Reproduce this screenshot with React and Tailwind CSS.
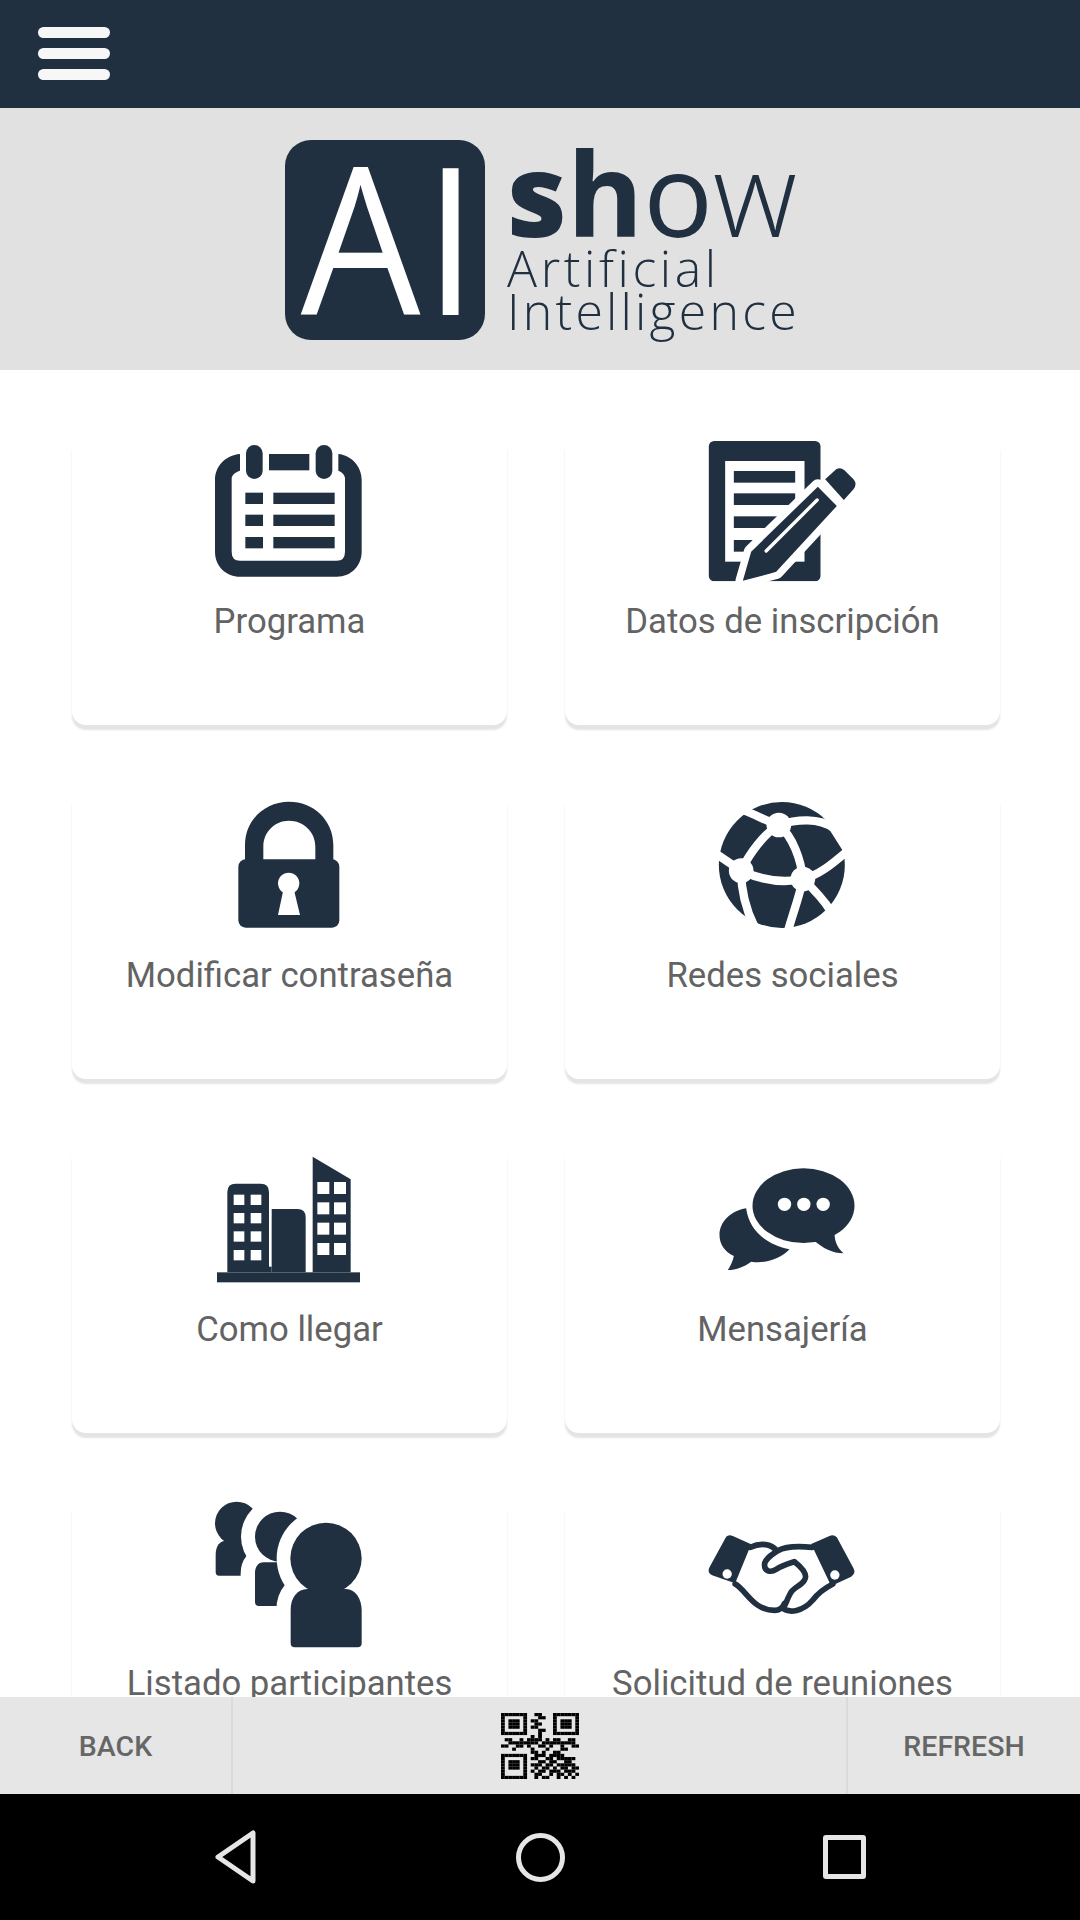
import React from 'react';

const NAVY = '#203040';

const CalendarIcon = () => (
  <svg viewBox="492 48 450 450" className="w-full h-full" fill={NAVY}>
    <path d="M570 102C525 106 495 140 495 180V395C495 440 530 470 570 470H860C905 470 935 435 935 395V180C935 140 905 106 865 102V152C875 155 885 165 885 175V395Q885 422 860 422H570Q545 422 545 395V175C545 165 558 155 570 152Z" />
    <rect x="588" y="75" width="50" height="102" rx="25" />
    <rect x="797" y="75" width="50" height="102" rx="25" />
    <rect x="657" y="102" width="121" height="49" />
    {[218, 284, 351].map((y) => (
      <g key={y}>
        <rect x="586" y={y} width="53" height="34" />
        <rect x="670" y={y} width="184" height="34" />
      </g>
    ))}
  </svg>
);

const FormIcon = () => (
  <svg viewBox="472.5 48 450 450" className="w-full h-full" fill={NAVY}>
    <rect x="478" y="63" width="335" height="421" rx="16" />
    <rect x="527" y="123" width="238" height="302" fill="#fff" />
    {[153, 220, 289, 360].map((y) => (
      <rect key={y} x="553" y={y} width="184" height="35" />
    ))}
    <path d="M580 482L605 395L805 200L862 258L680 455Z" fill="#fff" stroke="#fff" strokeWidth="44" strokeLinejoin="round" />
    <rect x="480" y="484" width="340" height="30" fill="#fff" />
    <path d="M580 482L605 395L805 200L862 258L680 455L665 460Z" />
    <path d="M827 178L860 148Q872 140 884 150L912 178Q924 192 912 208L883 240Z" />
    <path d="M650 393L803 240" stroke="#fff" strokeWidth="10" strokeLinecap="round" />
  </svg>
);

const LockIcon = () => (
  <svg viewBox="72 30 450 450" className="w-full h-full" fill={NAVY}>
    <path d="M165 240V195C165 120 225 65 297 65C370 65 430 120 430 195V240H376V200C376 155 340 122 297 122C255 122 220 155 220 200V240Z" />
    <rect x="145" y="238" width="303" height="205" rx="22" />
    <circle cx="296" cy="310" r="32" fill="#fff" />
    <path d="M280 330L264 405H330L312 330Z" fill="#fff" />
  </svg>
);

const GlobeIcon = () => (
  <svg viewBox="52.5 30 450 450" className="w-full h-full">
    <circle cx="277" cy="255" r="189" fill={NAVY} />
    <g fill="none" stroke="#fff" strokeWidth="25">
      <path d="M165 92C200 105 235 125 268 135C320 118 390 112 432 145L470 205" />
      <path d="M85 225L155 272" />
      <path d="M268 135C225 160 180 220 155 272" />
      <path d="M268 135C310 170 335 240 340 297" />
      <path d="M155 272C215 300 280 310 340 297C390 285 430 250 475 212" />
      <path d="M155 272C155 330 170 390 195 440" />
      <path d="M340 297C330 350 310 400 295 455" />
      <path d="M340 297C370 325 400 355 425 395" />
    </g>
    <circle cx="268" cy="135" r="37" fill="#fff" />
    <circle cx="155" cy="272" r="37" fill="#fff" />
    <circle cx="340" cy="297" r="37" fill="#fff" />
  </svg>
);

const CityIcon = () => (
  <svg viewBox="72 12 450 450" className="w-full h-full" fill={NAVY}>
    <rect x="81" y="397" width="429" height="30" />
    <path d="M112 397V156Q112 131 137 131H212Q237 131 237 156V397Z" />
    <path d="M245 397V207H322Q347 207 347 232V397Z" />
    <rect x="237" y="380" width="8" height="17" />
    <path d="M368 50L482 118V397H368Z" />
    {[164, 219, 274, 330].map((y) => (
      <g key={y} fill="#fff">
        <rect x="131" y={y} width="32" height="31" />
        <rect x="182" y={y} width="32" height="31" />
      </g>
    ))}
    {[126, 187, 248, 309].map((y) => (
      <g key={y} fill="#fff">
        <rect x="382" y={y} width="36" height="36" />
        <rect x="432" y={y} width="36" height="36" />
      </g>
    ))}
  </svg>
);

const ChatIcon = () => (
  <svg viewBox="52.5 12 450 450" className="w-full h-full" fill={NAVY}>
    <ellipse cx="342" cy="197" rx="153" ry="112" />
    <path d="M372 300C400 325 430 340 462 340C445 325 435 305 435 280Z" />
    <path d="M170 205C125 212 90 245 90 285C90 312 105 335 133 348C130 365 122 380 115 390C140 390 165 380 185 365C230 372 275 355 300 328C240 315 180 280 170 205Z" />
    <circle cx="285" cy="193" r="20" fill="#fff" />
    <circle cx="343" cy="193" r="20" fill="#fff" />
    <circle cx="401" cy="193" r="20" fill="#fff" />
  </svg>
);

const BIG_BODY = 'M302 460V360C302 320 325 295 355 297H465C495 295 515 325 515 360V460Q515 472 503 472H314Q302 472 302 460Z';
const MID_BODY = 'M195 335V250C195 230 205 215 225 217H300V348H207Q195 348 195 335Z';

const PeopleIcon = () => (
  <svg viewBox="72 24 450 450" className="w-full h-full" fill={NAVY}>
    <circle cx="140" cy="100" r="65" />
    <path d="M77 245V195C77 165 90 152 110 152H170V257H87Q77 257 77 245Z" />
    <circle cx="270" cy="140" r="117" fill="#fff" />
    <path d={MID_BODY} fill="#fff" stroke="#fff" strokeWidth="86" strokeLinejoin="round" />
    <circle cx="270" cy="140" r="75" />
    <path d={MID_BODY} />
    <circle cx="408" cy="205" r="148" fill="#fff" />
    <path d={BIG_BODY} fill="#fff" stroke="#fff" strokeWidth="86" strokeLinejoin="round" />
    <circle cx="408" cy="205" r="107" />
    <path d={BIG_BODY} />
  </svg>
);

const HandshakeIcon = () => (
  <svg viewBox="52.5 -6 450 450" className="w-full h-full" fill={NAVY}>
    <path d="M110 110Q118 102 130 108L185 133L137 250L68 226Q52 218 60 202Z" />
    <path d="M365 132L420 108Q432 102 442 112L492 205Q500 220 485 230L425 258Z" />
    <circle cx="113" cy="222" r="14" fill="#fff" />
    <circle cx="436" cy="225" r="14" fill="#fff" />
    <g fill="none" stroke={NAVY} strokeWidth="17" strokeLinecap="round" strokeLinejoin="round">
      <path d="M182 142C215 127 245 132 262 152" />
      <path d="M137 252C172 272 190 330 255 331C270 331 280 322 285 310" />
      <path d="M368 142C330 138 290 138 265 152C245 165 225 178 225 195C225 215 245 218 260 208C280 195 300 190 315 185C340 205 355 225 345 240C335 260 310 260 300 285C292 300 287 318 280 325C300 340 340 335 370 300C385 280 405 265 430 252" />
    </g>
  </svg>
);

const QR_ROWS = [
  '111111100110001111111',
  '100000100011001000001',
  '101110101100001011101',
  '101110100110001011101',
  '101110101100001011101',
  '100000100011001000001',
  '111111100010001111111',
  '000000001010000000000',
  '011001011110101100110',
  '001111111101111111110',
  '110011010011010010011',
  '000100001000100011000',
  '000000001101001100000',
  '111111100111011110000',
  '100000101100110111110',
  '101110100011011001100',
  '101110101110110111110',
  '101110100101101011011',
  '100000101011011101110',
  '100000100110010110101',
  '111111100101100101010',
];

const QrCode = () => (
  <svg viewBox="0 0 21 21" preserveAspectRatio="none" className="w-[78px] h-[66px]" fill="#000">
    {QR_ROWS.map((row, y) =>
      row.split('').map((cell, x) =>
        cell === '1' ? <rect key={`${x}-${y}`} x={x} y={y} width="1.02" height="1.02" /> : null
      )
    )}
  </svg>
);

const items = [
  { label: 'Programa', Icon: CalendarIcon },
  { label: 'Datos de inscripción', Icon: FormIcon },
  { label: 'Modificar contraseña', Icon: LockIcon },
  { label: 'Redes sociales', Icon: GlobeIcon },
  { label: 'Como llegar', Icon: CityIcon },
  { label: 'Mensajería', Icon: ChatIcon },
  { label: 'Listado participantes', Icon: PeopleIcon },
  { label: 'Solicitud de reuniones', Icon: HandshakeIcon },
];

const Logo = () => (
  <div className="flex items-start gap-[22px] text-[#203040] font-['Open_Sans',sans-serif]">
    <div className="w-[200px] h-[200px] rounded-[26px] bg-[#203040] flex items-center justify-center pl-[12px] pb-[10px] text-white text-[206px] font-normal leading-none tracking-[4px]">
      <span className="inline-block scale-x-[0.92]">AI</span>
    </div>
    <div className="w-[288px] flex flex-col">
      <div className="h-[104px] text-[116px] leading-[104px] whitespace-nowrap">
        <span className="font-extrabold">s</span>
        <span className="font-bold">h</span>
        <span className="font-medium">o</span>
        <span className="font-light">w</span>
      </div>
      <div className="h-[48px] text-[50px] leading-[48px] font-light whitespace-nowrap tracking-[3.6px]">Artificial</div>
      <div className="h-[43px] -mt-[5px] text-[50px] leading-[48px] font-light whitespace-nowrap tracking-[3.2px]">Intelligence</div>
    </div>
  </div>
);

export default function App() {
  return (
    <div className="w-[1080px] h-[1920px] flex flex-col overflow-hidden bg-white font-['Roboto',sans-serif]">
      <header className="h-[108px] shrink-0 bg-[#203040] flex items-center pl-[38px] pb-[2px]">
        <div className="w-[72px] flex flex-col gap-[10px]">
          <div className="h-[11px] rounded-full bg-[#f7f7f7]" />
          <div className="h-[11px] rounded-full bg-[#f7f7f7]" />
          <div className="h-[11px] rounded-full bg-[#f7f7f7]" />
        </div>
      </header>

      <div className="h-[262px] shrink-0 bg-[#e1e1e1] flex items-start justify-center pt-[32px]">
        <Logo />
      </div>

      <main className="flex-1 min-h-0 overflow-hidden">
        <div className="grid grid-cols-[435px_435px] gap-x-[58px] gap-y-[65px] pl-[72px] pt-[66px]">
          {items.map(({ label, Icon }) => (
            <div
              key={label}
              className="h-[289px] shrink-0 rounded-[14px] bg-white flex flex-col items-center shadow-[0_5px_2px_#e4e4e4,0_0_2px_#fafafa]"
            >
              <div className="w-[150px] h-[150px] mr-[2px]">
                <Icon />
              </div>
              <span className="mt-[11px] text-[34.7px] leading-[48px] text-[#636363]">{label}</span>
            </div>
          ))}
        </div>
      </main>

      <div className="h-[97px] shrink-0 bg-[#e6e6e6] grid grid-cols-[231px_1fr_232px] text-[28.5px] font-medium text-[#666]">
        <div className="flex items-center justify-center pt-[3px]">BACK</div>
        <div className="flex items-center justify-center border-x-2 border-[#dadada]">
          <QrCode />
        </div>
        <div className="flex items-center justify-center pt-[3px]">REFRESH</div>
      </div>

      <nav className="h-[126px] shrink-0 bg-black flex items-center justify-center">
        <div className="w-[304px] flex justify-center">
          <svg width="48" height="54" viewBox="0 0 48 54" fill="none" stroke="#e6e6e6" strokeWidth="5" strokeLinejoin="round">
            <path d="M41 3V51L6 27Z" />
          </svg>
        </div>
        <div className="w-[304px] flex justify-center">
          <div className="w-[49px] h-[49px] rounded-full border-[5px] border-[#e6e6e6]" />
        </div>
        <div className="w-[304px] flex justify-center">
          <div className="w-[43px] h-[44px] rounded-[3px] border-[5px] border-[#e6e6e6]" />
        </div>
      </nav>
    </div>
  );
}
